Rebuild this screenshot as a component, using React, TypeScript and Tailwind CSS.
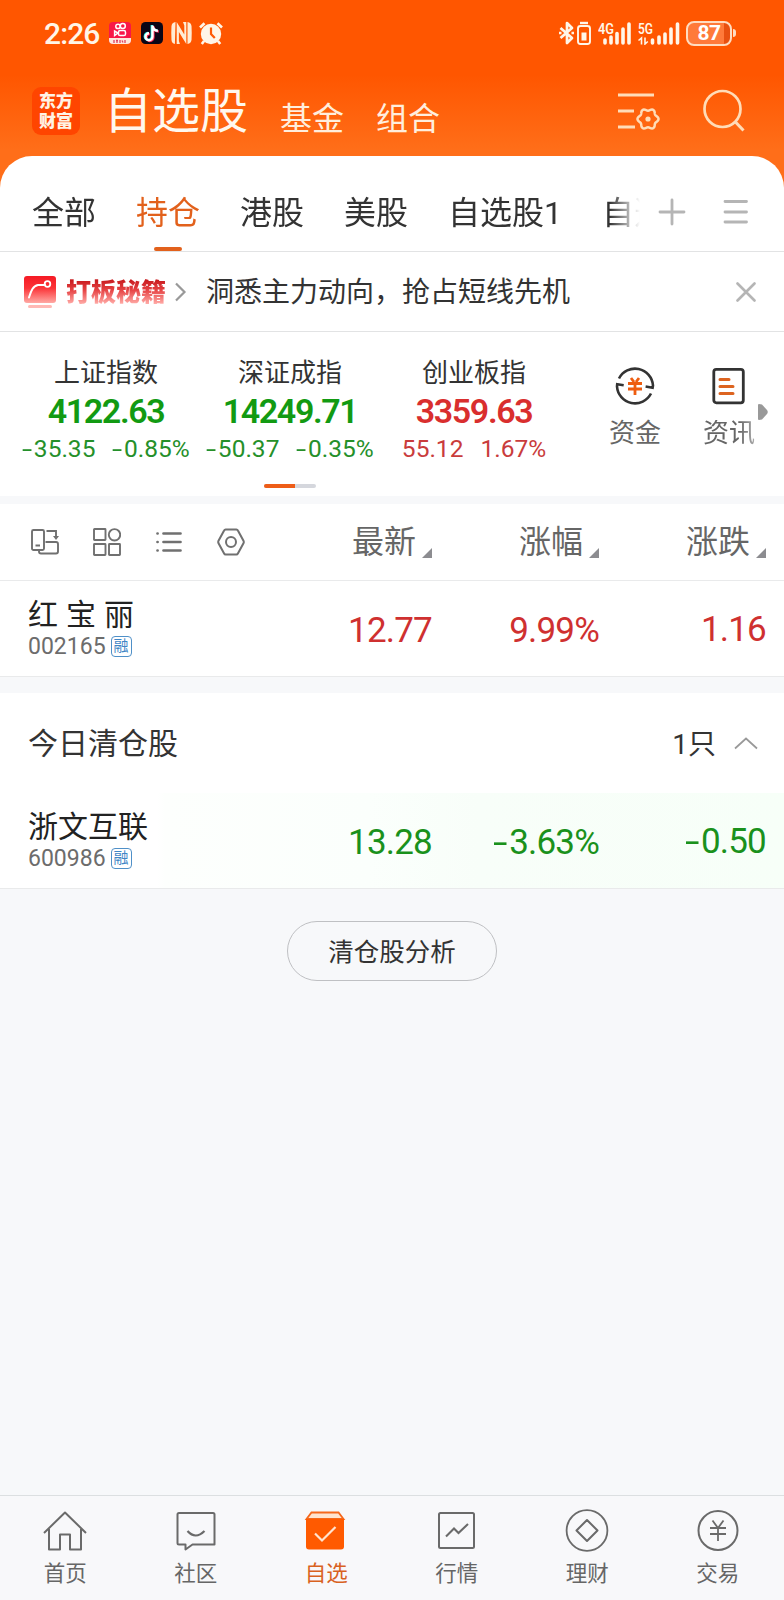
import React from "react";

function Num({ value, className = "" }: { value: string; className?: string }) {
  const negative = value.startsWith("-");
  return (
    <span className={`whitespace-nowrap ${className}`}>
      {negative && <span className="mr-[0.07em] inline-block w-[0.4em] origin-left scale-x-[1.5] text-left">-</span>}
      {negative ? value.slice(1) : value}
    </span>
  );
}

function gearPath(cx: number, cy: number, radius: number, bump: number) {
  const points: string[] = [];
  for (let i = 0; i < 120; i++) {
    const a = (i / 120) * Math.PI * 2;
    const r = radius + bump * Math.cos(6 * a);
    points.push(`${(cx + r * Math.cos(a)).toFixed(2)} ${(cy + r * Math.sin(a)).toFixed(2)}`);
  }
  return `M${points.join("L")}Z`;
}

function StatusBar() {
  return (
    <div className="flex h-[66px] items-center justify-between pr-[48px] pl-[44px] text-[#fff6e8]">
      <div className="flex h-full items-center">
        <span className="w-[65px] pt-[2px] text-[30px] leading-[30px] font-medium tracking-[-0.9px]">2:26</span>
        <svg width="22" height="22" viewBox="0 0 22 22" fill="none">
          <rect width="22" height="22" rx="4" fill="#f81848" />
          <path d="M0 16h22v2a4 4 0 0 1-4 4H4a4 4 0 0 1-4-4z" fill="#ffe9dc" />
          <g stroke="#fff" strokeWidth="1.5">
            <circle cx="9" cy="4.400" r="2.200" />
            <circle cx="13.800" cy="4" r="2.500" />
            <rect x="9.500" y="8.600" width="7" height="5" rx="1.600" />
            <path d="M9 11 5.600 9v4.600z" />
          </g>
          <path d="M5 18v3M7 18.500h2M8 18v3M11 18v3M13 18.500l1 2M16 18v3" stroke="#e04060" strokeWidth="1.300" />
        </svg>
        <svg className="ml-[10px]" width="22" height="22" viewBox="0 0 22 22" fill="none">
          <rect width="22" height="22" rx="4.500" fill="#0b0616" />
          <path d="M11.500 3.500v11.300a3.500 3.500 0 1 1-3.500-3.500M11.500 4c.4 2.600 2.200 4.600 5.400 4.800" stroke="#ff2c55" strokeWidth="2.400" transform="translate(.9 .7)" />
          <path d="M11.500 3.500v11.300a3.500 3.500 0 1 1-3.500-3.500M11.500 4c.4 2.600 2.200 4.600 5.400 4.800" stroke="#25f4ee" strokeWidth="2.400" transform="translate(-.7 -.4)" />
          <path d="M11.500 3.500v11.300a3.500 3.500 0 1 1-3.500-3.500M11.500 4c.4 2.600 2.200 4.600 5.400 4.800" stroke="#fff" strokeWidth="2.400" />
        </svg>
        <svg className="ml-[8px]" width="21" height="22" viewBox="0 0 21 22" fill="#ffecd4">
          <path d="M4.500 0 3.900 22Q.8 21.500.5 18 0 11 .5 4 .9.500 4.500 0z" />
          <path d="M16.500 0v22q3.500-.5 4-4 .5-7 0-14-.5-3.500-4-4z" />
          <path d="M5.700 22V0L13.300 12.500V3.500L12 0h3.300v22L7.900 10v9l1 3z" />
        </svg>
        <svg className="ml-[7px]" width="24" height="23" viewBox="0 0 24 23" fill="none">
          <circle cx="12" cy="12" r="10.200" fill="#fff6e8" />
          <path d="M1 5.500 5.500 1.200M23 5.500l-4.500-4.300M5 19l-2.200 3M19 19l2.200 3" stroke="#fff6e8" strokeWidth="2.600" />
          <path d="M12 5.500V12l3.800 4" stroke="#ff5a05" strokeWidth="2.200" />
        </svg>
      </div>
      <div className="flex h-full items-center">
        <svg width="32" height="24" viewBox="0 0 32 24" fill="none" stroke="#fff6e8">
          <path d="M1.500 7l11.500 10-5 5V2l5 5L1.500 17" strokeWidth="2.700" strokeLinejoin="round" />
          <path d="M0 12h2.500M12.500 12H15" strokeWidth="2.400" />
          <rect x="19" y="5" width="12" height="18" rx="2.500" strokeWidth="1.900" />
          <path d="M21 2h8" strokeWidth="2.400" />
          <rect x="22.500" y="11.500" width="5" height="8" fill="#fff6e8" stroke="none" />
        </svg>
        <svg className="ml-[7px]" width="33" height="23" viewBox="0 0 33 23" fill="none" stroke="#fff6e8">
          <path d="M7 21v-3M13 21v-6M19 21V11.500M25 21V7M31 21V2" strokeWidth="3.600" strokeLinecap="round" />
          <text x="0" y="11.500" fontSize="14" fontWeight="600" fill="#fff6e8" stroke="none" textLength="16" lengthAdjust="spacingAndGlyphs">4G</text>
        </svg>
        <svg className="ml-[7px]" width="42" height="23" viewBox="0 0 42 23" fill="none" stroke="#fff6e8">
          <path d="M14.500 21v-3M21 21v-6M27 21v-9M33 21V7M39.500 21V2" strokeWidth="3.600" strokeLinecap="round" />
          <path d="M.5 18.500l3-2.500v6.500M7 15.500V22l2.800-2.500" strokeWidth="1.600" />
          <text x="0" y="11.500" fontSize="14" fontWeight="600" fill="#fff6e8" stroke="none" textLength="15" lengthAdjust="spacingAndGlyphs">5G</text>
        </svg>
        <div className="ml-[6px] flex h-[25px] w-[46px] items-center justify-center rounded-[8px] border-2 border-[#ffdcc0] bg-[linear-gradient(90deg,#ff7a3a_86%,#e85010_86%)] pt-[1px] text-[21px] leading-none font-bold tracking-[-0.5px] text-white">87</div>
        <div className="ml-[1px] h-[8px] w-[3px] rounded-r bg-[#ffdcc0]" />
      </div>
    </div>
  );
}

function TitleBar() {
  return (
    <div className="flex h-[90px] items-start pl-[32px]">
      <div className="mt-[21px] flex h-[48px] w-[48px] items-center justify-center rounded-[9px] bg-[#ff4500] text-center font-['Noto_Sans_CJK_SC'] text-[17px] leading-[20px] font-black text-[#fff3e4]">
        <span className="pb-[2px]">东方<br />财富</span>
      </div>
      <h1 className="mt-[22px] ml-[24px] text-[48px] leading-[48px] text-[#fff8ee]">自选股</h1>
      <span className="mt-[37px] ml-[32px] text-[32px] leading-[32px] text-[#ffeedd]">基金</span>
      <span className="mt-[37px] ml-[32px] text-[32px] leading-[32px] text-[#ffeedd]">组合</span>
      <svg className="mt-[24px] ml-[178px]" width="44" height="42" viewBox="0 0 44 42" fill="none" stroke="#ffdcb8" strokeWidth="2.800">
        <path d="M0 5h36M0 21h16M0 37h17" />
        <path d={gearPath(30, 29, 9.400, 1.100)} strokeWidth="2.500" strokeLinejoin="round" />
        <circle cx="30" cy="29" r="2.600" fill="#ffdcb8" stroke="none" />
      </svg>
      <svg className="mt-[23px] ml-[40px]" width="44" height="44" viewBox="0 0 44 44" fill="none" stroke="#ffdcb8" strokeWidth="2.700">
        <circle cx="20.500" cy="20" r="18" />
        <path d="M33 32.500 41.500 41.500" strokeWidth="3" />
      </svg>
    </div>
  );
}

function Tabs() {
  return (
    <div className="flex h-[96px] items-start border-b border-[#e2e3e4] pl-[32px] text-[32px] leading-[32px] text-[#333]">
      <div className="flex h-full w-[608px] gap-[40px] overflow-hidden pt-[41px] whitespace-nowrap [mask-image:linear-gradient(90deg,#000_95%,transparent_100%)]">
        <span>全部</span>
        <span className="flex flex-col items-center text-[#e2611c]">
          持仓
          <span className="mt-[18px] h-[4px] w-[28px] rounded-full bg-[#e2611c]" />
        </span>
        <span>港股</span>
        <span>美股</span>
        <span>自选股1</span>
        <span>自选</span>
      </div>
      <svg className="mt-[42px] ml-[18px]" width="28" height="28" viewBox="0 0 28 28" stroke="#b5b5b5" strokeWidth="2.800" strokeLinecap="round">
        <path d="M2 14h24M14 2v24" />
      </svg>
      <svg className="mt-[42px] ml-[37px]" width="26" height="28" viewBox="0 0 26 28" stroke="#b5b5b5" strokeWidth="2.800" strokeLinecap="round">
        <path d="M2 3.500h21.500M2 14h21.500M2 24h21.500" />
      </svg>
    </div>
  );
}

function Promo() {
  return (
    <div className="flex h-[80px] items-center border-b border-[#e2e3e4] pl-[24px]">
      <svg width="32" height="34" viewBox="0 0 32 34" fill="none">
        <defs>
          <linearGradient id="badge" x1="0" y1="0" x2="0" y2="1">
            <stop offset="0" stopColor="#f51a24" />
            <stop offset=".45" stopColor="#fb3438" />
            <stop offset="1" stopColor="#ffa9a4" />
          </linearGradient>
        </defs>
        <rect y="1" width="32" height="27" rx="3" fill="url(#badge)" />
        <path d="M5 22.500c2-6 3.500-11.500 9-12.500 3-.4 5 .3 7 0" stroke="#fff" strokeWidth="2" strokeLinecap="round" />
        <circle cx="23.500" cy="9" r="2.800" stroke="#fff" strokeWidth="1.800" />
        <rect x="4" y="30" width="24" height="3" rx="1.500" fill="#ffb9b5" />
      </svg>
      <span className="mb-[3px] ml-[10px] bg-[linear-gradient(180deg,#c91c20_20%,#e64344_50%,#ffa8a4_92%)] bg-clip-text font-['Noto_Sans_CJK_SC'] text-[25px] leading-[32px] font-black text-transparent">打板秘籍</span>
      <svg className="ml-[9px]" width="12" height="20" viewBox="0 0 12 20" fill="none" stroke="#999" strokeWidth="2.200">
        <path d="M1 1.500 9.500 10 1 18.500" />
      </svg>
      <span className="mt-[2px] ml-[19px] w-[364px] text-[28px] leading-[28px] whitespace-nowrap text-[#333]">洞悉主力动向，抢占短线先机</span>
      <svg className="mt-[1px] ml-[166px]" width="20" height="20" viewBox="0 0 20 20" stroke="#b5b5b5" strokeWidth="2.600" strokeLinecap="round">
        <path d="M1.500 1.500l17 17M18.500 1.500l-17 17" />
      </svg>
    </div>
  );
}

function Index({ name, value, diff, pct, up }: { name: string; value: string; diff: string; pct: string; up?: boolean }) {
  return (
    <div className={`flex w-[184px] flex-col items-center ${up ? "text-[#d92e2e]" : "text-[#129a12]"}`}>
      <span className="text-[26px] leading-[32px] text-[#333]">{name}</span>
      <Num value={value} className="text-[34px] leading-[44px] font-semibold tracking-[-1.400px]" />
      <div className={`mt-[1px] flex text-[24.5px] leading-[30px] ${up ? "gap-[17px] text-[#c93c3c]" : "gap-[17px] text-[#25902a]"}`}>
        <Num value={diff} />
        <Num value={pct} />
      </div>
    </div>
  );
}

function Indices() {
  return (
    <div className="flex h-[164px] bg-white pt-[25px]">
      <div className="flex w-[566px] flex-col">
        <div className="flex pl-[14px]">
          <Index name="上证指数" value="4122.63" diff="-35.35" pct="-0.85%" />
          <Index name="深证成指" value="14249.71" diff="-50.37" pct="-0.35%" />
          <Index name="创业板指" value="3359.63" diff="55.12" pct="1.67%" up />
        </div>
        <div className="mt-[20px] ml-[264px] h-[4px] w-[52px] overflow-hidden rounded-full bg-[#d5d7dd]">
          <div className="h-full w-[31px] bg-[#ee5d18]" />
        </div>
      </div>
      <div className="ml-[42px] flex w-[54px] flex-col items-center pt-[8px]">
        <svg width="42" height="42" viewBox="0 0 42 42" fill="none" stroke="#333" strokeWidth="2.600">
          <path d="M5 13.500A18 18 0 0 1 39 20.500l-.4 2.200-7-1.200" />
          <path d="M37 28.500A18 18 0 0 1 3 21.500l.2-2.200 6.500 1" />
          <g stroke="#ee5d10" strokeWidth="2.800">
            <path d="M17 13l3 4M25 13l-3 4M14 18.500h14M14 24h14M21 18v12" />
          </g>
        </svg>
        <span className="mt-[13px] text-[26px] leading-[26px] text-[#666]">资金</span>
      </div>
      <div className="ml-[40px] flex w-[54px] flex-col items-center pt-[8px]">
        <svg width="36" height="42" viewBox="0 0 36 42" fill="none">
          <rect x="2.800" y="4.300" width="29.500" height="33.500" rx="2.500" stroke="#333" strokeWidth="2.800" />
          <path d="M9 14.500h9M9 21.500h13M9 28.500h13" stroke="#dd6420" strokeWidth="3" strokeLinecap="round" />
        </svg>
        <span className="mt-[13px] text-[26px] leading-[26px] text-[#666] [mask-image:linear-gradient(90deg,#000_70%,#0008_100%)]">资讯</span>
      </div>
      <svg className="mt-[47px] ml-[2px]" width="10" height="16" viewBox="0 0 10 16">
        <path d="M1 0 4 .5 9 6q1.500 2 0 4L4 15.500 1 16q-1 0-1-1V1q0-1 1-1z" fill="#999" />
      </svg>
    </div>
  );
}

function TableHead() {
  return (
    <div className="flex h-[77px] items-start border-b border-[#e9eaeb] bg-white pl-[31px]">
      <div className="flex gap-[34px] pt-[23px]">
        <svg width="28" height="30" viewBox="0 0 28 30" fill="none" stroke="#707070" strokeWidth="1.900">
          <rect x="1" y="3" width="12" height="20" rx="1.500" />
          <path d="M4.500 18.500H9M14.500 15H25a2 2 0 0 1 2 2v7.500a2 2 0 0 1-2 2H10a2 2 0 0 1-2-2V24M15.500 4H25v6" />
          <path d="M22 9h6l-3 4z" fill="#707070" stroke="none" />
        </svg>
        <svg width="28" height="30" viewBox="0 0 28 30" fill="none" stroke="#707070" strokeWidth="1.900">
          <rect x="1" y="2" width="11.500" height="11" rx=".5" />
          <circle cx="21.500" cy="7.800" r="5.700" />
          <rect x="1" y="17" width="11.500" height="11" rx=".5" />
          <rect x="16" y="17" width="11" height="11" rx=".5" />
        </svg>
        <svg width="28" height="30" viewBox="0 0 28 30" stroke="#707070" strokeWidth="2.700" strokeLinecap="round">
          <path d="M2.500 6.500h.1M2.500 15h.1M2.500 23.500h.1M8.500 6.500h17M8.500 15h17M8.500 23.500h17" />
        </svg>
        <svg width="28" height="30" viewBox="0 0 28 30" fill="none" stroke="#707070" strokeWidth="2">
          <path d="M8.600 2.500h10.800q1 0 1.500 1L26.600 14q.4 1 0 2L20.900 26.500q-.5 1-1.500 1H8.600q-1 0-1.500-1L1.400 16q-.4-1 0-2L7.100 3.500q.5-1 1.500-1z" />
          <circle cx="14" cy="15" r="5" />
        </svg>
      </div>
      {["最新", "涨幅", "涨跌"].map((t, i) => (
        <div key={t} className={`flex items-start justify-end pt-[22px] ${i === 0 ? "w-[187px]" : "w-[167px]"}`}>
          <span className="text-[32px] leading-[32px] text-[#666]">{t}</span>
          <svg className="mt-[22px] ml-[6px]" width="10" height="10" viewBox="0 0 10 10">
            <path d="M10 0v10H0z" fill="#8c8c90" />
          </svg>
        </div>
      ))}
    </div>
  );
}

function StockRow({ name, code, values, up }: { name: string; code: string; values: string[]; up?: boolean }) {
  return (
    <div className={`flex h-[96px] border-b border-[#e9eaeb] pl-[28px] ${up ? "bg-white" : "bg-[linear-gradient(90deg,#fff_20%,#fdfffd_21%,#fbfffc_47%,#f8fef9_61%,#f7fff8_100%)]"}`}>
      <div className="w-[218px] pt-[18px]">
        <div className="text-[30px] leading-[32px] text-[#222] [word-spacing:0.600px]">{name}</div>
        <div className="flex items-center pt-[1px]">
          <span className="text-[23px] leading-[29px] text-[#6c6c6c]">{code}</span>
          <span className="mb-[1px] ml-[5px] flex h-[21px] w-[21px] items-center justify-center rounded-[4px] border-[1.5px] border-[#4f90c8] text-[15px] leading-none text-[#3f86c6]">融</span>
        </div>
      </div>
      {values.map((v, i) => (
        <div key={v} className={`text-right text-[35px] tracking-[-0.8px] ${i === 2 ? "leading-[97px]" : "leading-[99px]"} ${i === 0 ? "w-[186px]" : "w-[167px]"} ${up ? "text-[#cf3030]" : "text-[#1a911c]"}`}>
          <Num value={v} />
        </div>
      ))}
    </div>
  );
}

const navItems: { label: string; active?: boolean; icon: React.ReactNode }[] = [
  {
    label: "首页",
    icon: <path d="M1 22 22 1.500 43 22M6 18v20.500h11V23.500h10v15h11V18" strokeLinejoin="round" />,
  },
  {
    label: "社区",
    icon: (
      <>
        <path d="M5 2h34q1.500 0 1.500 1.500v30H18.500l-7 5v-5H5q-1.500 0-1.500-1.500V3.500Q3.500 2 5 2z" strokeLinejoin="round" />
        <path d="M13.500 20q8 9 17 0" strokeWidth="2.200" />
      </>
    ),
  },
  {
    label: "自选",
    active: true,
    icon: (
      <>
        <path d="M2.500 8 7.500 1.500h27L39.500 8z" fill="#ffe3cf" stroke="#f5681c" strokeWidth="1.800" />
        <path d="M2 8h38v27.500q0 3-3 3H5q-3 0-3-3z" fill="#ff5a00" stroke="none" />
        <path d="M11 22.500l7 7L31.500 16" stroke="#ffe3cf" strokeWidth="2.200" />
      </>
    ),
  },
  {
    label: "行情",
    icon: (
      <>
        <rect x="4" y="2" width="35" height="35" rx="1.500" />
        <path d="M11 25.500l8-8 4.500 4.500 9.500-9" strokeWidth="2.100" />
      </>
    ),
  },
  {
    label: "理财",
    icon: (
      <>
        <circle cx="22" cy="19.500" r="20.400" strokeWidth="1.800" />
        <path d="M22 9 32.500 19.500 22 30 11.500 19.500z" strokeLinejoin="round" />
      </>
    ),
  },
  {
    label: "交易",
    icon: (
      <>
        <circle cx="22" cy="19.500" r="19.500" />
        <path d="M16.500 9.500 22 17l5.500-7.500M14 17h16M14 23h16M22 17v13" strokeWidth="1.800" />
      </>
    ),
  },
];

function BottomNav() {
  return (
    <nav className="grid h-[105px] grid-cols-6 border-t border-[#dcdfe1] bg-[#f8f8fa] pr-[1px]">
      {navItems.map((n) => (
        <div key={n.label} className={`flex flex-col items-center pt-[15px] text-[21.5px] leading-[22px] ${n.active ? "text-[#d9621f]" : "text-[#666]"}`}>
          <svg className="overflow-visible" width="44" height="40" viewBox="0 0 44 40" fill="none" stroke="#6a6a6a" strokeWidth="2">
            {n.icon}
          </svg>
          <span className="mt-[12px]">{n.label}</span>
        </div>
      ))}
    </nav>
  );
}

export default function App() {
  return (
    <div className="flex h-[1600px] w-[784px] flex-col overflow-hidden bg-[#f7f8fa] font-[Roboto,'Noto_Sans_CJK_SC',sans-serif]">
      <header className="bg-[linear-gradient(180deg,#ff5600_75px,#ff6e19_150px)] pb-[32px]">
        <StatusBar />
        <TitleBar />
      </header>
      <div className="relative -mt-[32px] rounded-t-[32px] bg-white">
        <Tabs />
        <Promo />
      </div>
      <Indices />
      <div className="mt-[8px]">
        <TableHead />
        <StockRow name="红 宝 丽" code="002165" values={["12.77", "9.99%", "1.16"]} up />
      </div>
      <div className="mt-[16px]">
        <div className="flex h-[100px] items-center bg-white pt-[2px] pr-[26px] pl-[28px] text-[#333]">
          <span className="flex-1 text-[30px] leading-[30px]">今日清仓股</span>
          <span className="pt-[1px] text-[28px] leading-[28px]">1只</span>
          <svg className="mb-[2px] ml-[18px]" width="24" height="14" viewBox="0 0 24 14" fill="none" stroke="#999" strokeWidth="1.700">
            <path d="M1 12.500 12 2.500l11 10" />
          </svg>
        </div>
        <StockRow name="浙文互联" code="600986" values={["13.28", "-3.63%", "-0.50"]} />
      </div>
      <button className="mx-auto mt-[32px] h-[60px] w-[210px] rounded-full border border-[#bfc0c3] pt-[1px] text-[25.5px] leading-[58px] text-[#333]">
        清仓股分析
      </button>
      <div className="flex-1" />
      <BottomNav />
    </div>
  );
}
